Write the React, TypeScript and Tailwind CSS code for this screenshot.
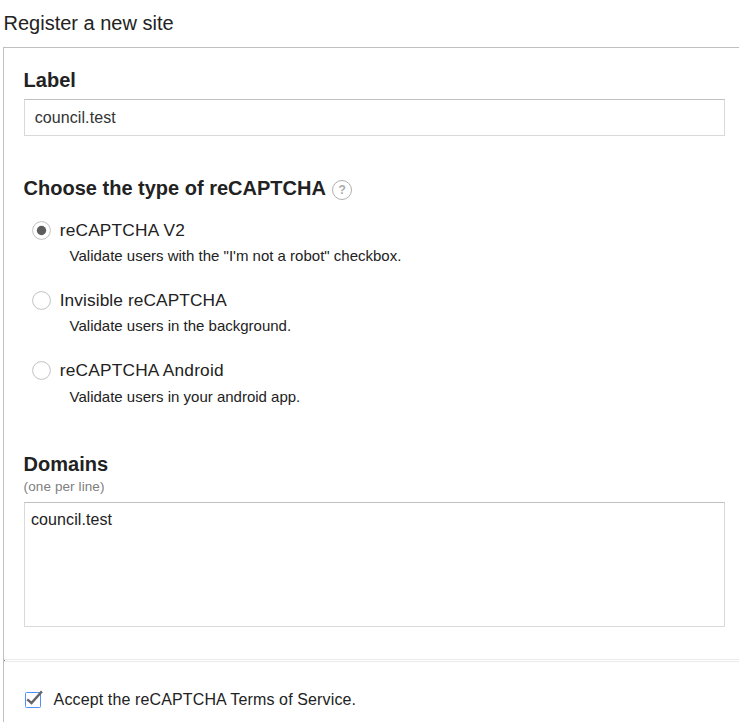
type OptionProps = {
  title: string;
  detail: string;
  tracking: string;
  selected?: boolean;
};

function Option({ title, detail, tracking, selected = false }: OptionProps) {
  return (
    <label className="block h-[70.3px]">
      <span className="flex h-[22px] items-center">
        <svg className="ml-[8px] size-[19px] shrink-0" viewBox="0 0 19 19" fill="none">
          <circle cx="9.5" cy="9.5" r="8.9" stroke="#c0c0c0" />
          {selected && <circle cx="9.5" cy="9.5" r="4.7" fill="#5c5c5c" />}
        </svg>
        <span className={`ml-[8.7px] h-[22.4px] text-[17.3px] leading-[22px] ${tracking}`}>{title}</span>
      </span>
      <span className="ml-[45.6px] mt-[5px] block text-[15px] leading-5">{detail}</span>
    </label>
  );
}

export default function App() {
  return (
    <main className="h-[722px] w-full overflow-hidden bg-white pl-[3px] font-['Liberation_Sans',Arial,sans-serif] whitespace-nowrap text-[#222]">
      <h1 className="h-[47px] pl-[0.5px] pt-[11px] text-[20px] leading-6">Register a new site</h1>
      <div className="h-[675px] border-l border-t border-[#c0c0c0]">
        <form className="h-[611px] pl-5 pr-[14px] pt-5">
          <h2 className="-ml-[0.4px] h-[31px] text-[20px] leading-6 font-bold">Label</h2>
          <input
            className="block h-[37px] w-full border border-[#d9d9d9] border-t-[#c0c0c0] pl-[9.7px] text-[16px] tracking-[0.09px] text-[#333] outline-none"
            defaultValue="council.test"
          />
          <div className="mt-[40px] flex h-6 items-start">
            <h2 className="-ml-[0.4px] text-[20px] leading-6 font-bold">Choose the type of reCAPTCHA</h2>
            <span className="ml-[6.4px] mt-1 flex size-5 items-center justify-center rounded-full border border-[#b0b0b0] text-[12px] font-bold text-[#aaa]">
              ?
            </span>
          </div>
          <div className="mt-[19px] h-[233px]">
            <Option
              title="reCAPTCHA V2"
              detail={'Validate users with the "I\'m not a robot" checkbox.'}
              tracking="tracking-[0.2px]"
              selected
            />
            <Option
              title="Invisible reCAPTCHA"
              detail="Validate users in the background."
              tracking="tracking-[0.1px]"
            />
            <Option
              title="reCAPTCHA Android"
              detail="Validate users in your android app."
              tracking="tracking-[0.22px] -mt-px"
            />
          </div>
          <h2 className="-ml-[0.4px] text-[20px] leading-6 font-bold">Domains</h2>
          <p className="-ml-[0.4px] h-[26px] pt-[3px] text-[13.5px] leading-4 tracking-[0.1px] text-[#808080]">
            (one per line)
          </p>
          <textarea
            className="block h-[125px] w-full resize-none border border-[#d9d9d9] border-t-[#c0c0c0] px-[6px] py-[5px] text-[16px] leading-6 tracking-[0.09px] outline-none"
            defaultValue="council.test"
          />
        </form>
        <div className="flex h-[3px] items-center border-y border-[#ebebeb]">
          <span className="size-px bg-[#888]" />
        </div>
        <label className="flex h-[60px] items-center pl-[21px] pt-[15px]">
          <svg className="size-[18px] shrink-0 overflow-visible" viewBox="0 0 18 18" fill="none">
            <rect x=".5" y="1.5" width="15" height="15" rx="1" stroke="#4d90fe" />
            <path d="M2.2 8.4 6.5 12 16.9 .4" stroke="#666" strokeWidth="2.4" />
          </svg>
          <span className="ml-[10.6px] text-[16px] leading-5 tracking-[0.13px]">Accept the reCAPTCHA Terms of Service.</span>
        </label>
      </div>
    </main>
  );
}
